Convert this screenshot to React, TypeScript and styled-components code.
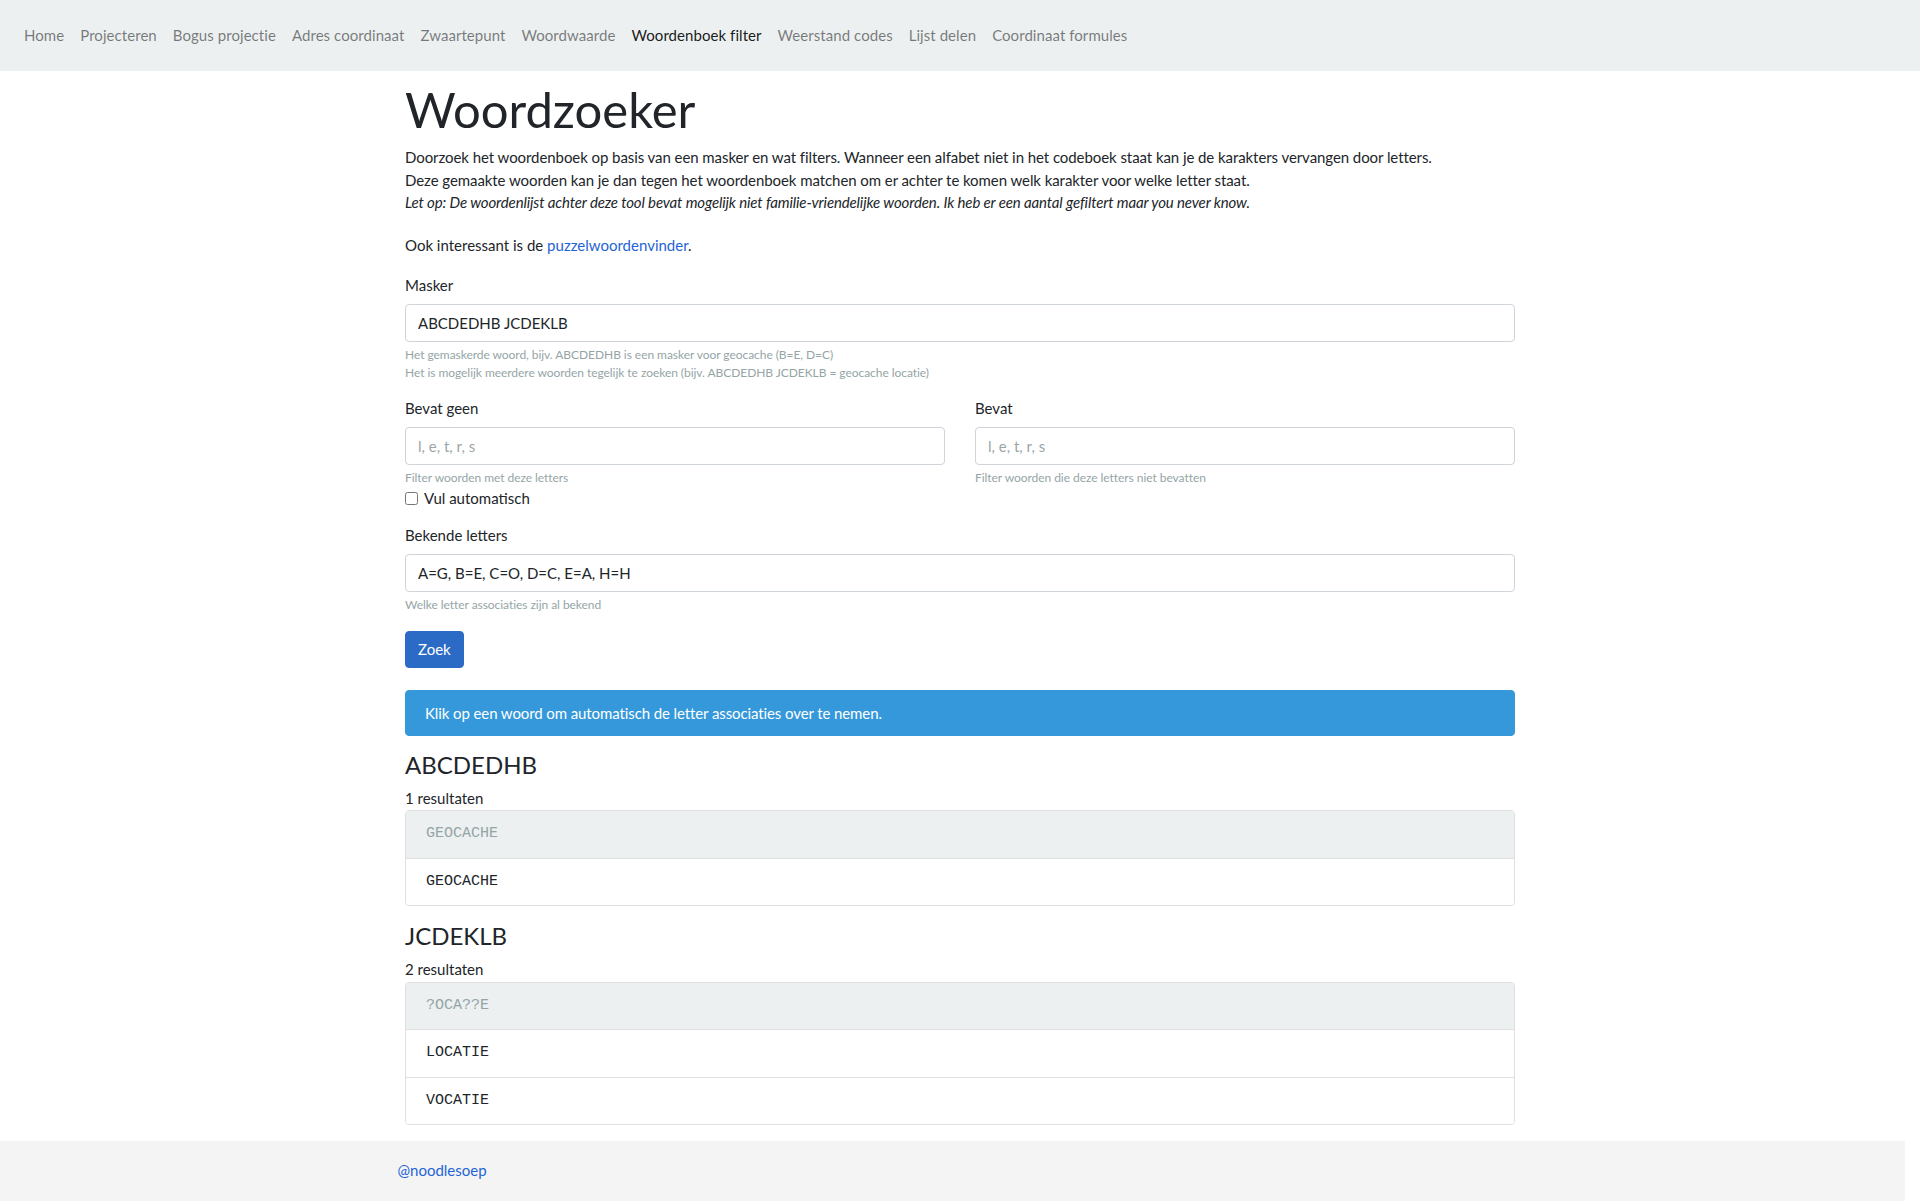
import React from "react";
import styled, { createGlobalStyle } from "styled-components";

const GlobalStyle = createGlobalStyle`
  *, *::before, *::after { box-sizing: border-box; }
  html, body { margin: 0; padding: 0; }
  body {
    font-family: Lato, "Open Sans", "Liberation Sans", sans-serif;
    font-size: 15px;
    line-height: 1.5;
    color: #212529;
    background: #fff;
  }
`;

const NavBar = styled.nav`
  background: #ecf0f1;
  padding: 16px 16px;
  display: flex;
  align-items: center;
`;

const NavList = styled.ul`
  list-style: none;
  margin: 0;
  padding: 0;
  display: flex;
`;

const NavLink = styled.a<{ $active?: boolean }>`
  display: block;
  padding: 8px 8px;
  line-height: 22.5px;
  font-size: 15px;
  letter-spacing: 0.06px;
  text-decoration: none;
  color: ${(p) => (p.$active ? "rgba(0,0,0,0.9)" : "rgba(0,0,0,0.5)")};
  cursor: pointer;
`;

const Container = styled.main`
  width: 1140px;
  margin: 0 auto;
  padding: 9px 15px 0;
`;

const Title = styled.h1`
  font-size: 49px;
  font-weight: 400;
  line-height: 1.2;
  margin: 0 0 8px;
`;

const Intro = styled.p`
  margin: 0 0 20px;
  letter-spacing: -0.07px;
  em { letter-spacing: -0.13px; }
`;

const Para = styled.p`
  margin: 0 0 18px;
`;

const Link = styled.a`
  color: #1f64d4;
  text-decoration: none;
`;

const FormGroup = styled.div`
  margin-bottom: 15px;
`;

const Label = styled.label`
  display: inline-block;
  margin-bottom: 7.5px;
`;

const Input = styled.input`
  display: block;
  width: 100%;
  height: 38px;
  padding: 6px 12px;
  font-family: inherit;
  font-size: 15px;
  line-height: 1.5;
  color: #212529;
  background: #fff;
  border: 1px solid #ced4da;
  border-radius: 4px;
  outline: none;
  &::placeholder { color: #9aa6a7; }
`;

const Help = styled.small`
  display: block;
  margin-top: 3.75px;
  font-size: 12px;
  line-height: 18px;
  letter-spacing: -0.05px;
  color: #95a5a6;
`;

const Row = styled.div`
  display: grid;
  grid-template-columns: 1fr 1fr;
  column-gap: 30px;
`;

const Check = styled.label`
  display: flex;
  align-items: flex-start;
  gap: 6px;
  line-height: 22.5px;
  input { margin: 5px 0 0 0; width: 13px; height: 13px; }
`;

const Button = styled.button`
  display: inline-block;
  font-family: inherit;
  font-size: 15px;
  line-height: 22.5px;
  padding: 6px 12px;
  color: #fff;
  background: #2c6bc5;
  border: 1px solid #2c6bc5;
  border-radius: 4px;
  margin: 2px 0 22px;
  cursor: pointer;
`;

const Alert = styled.div`
  background: #3498db;
  border: 1px solid #3498db;
  color: #fff;
  border-radius: 4px;
  padding: 11px 19px;
  margin-bottom: 15px;
  letter-spacing: -0.1px;
`;

const SectionTitle = styled.h3`
  font-size: 24px;
  font-weight: 400;
  line-height: 1.2;
  margin: 0 0 7px;
`;

const Count = styled.div`
  line-height: 22.5px;
`;

const List = styled.ul`
  list-style: none;
  margin: 1px 0 16px;
  padding: 0;
  border: 1px solid rgba(0, 0, 0, 0.125);
  border-radius: 4px;
  overflow: hidden;
`;

const Item = styled.li<{ $head?: boolean }>`
  padding: 12px 20px;
  line-height: 22.5px;
  font-family: "Liberation Mono", "DejaVu Sans Mono", monospace;
  font-size: 15px;
  background: ${(p) => (p.$head ? "#ecf0f1" : "#fff")};
  color: ${(p) => (p.$head ? "#95a5a6" : "#212529")};
  & + & { border-top: 1px solid rgba(0, 0, 0, 0.125); }
  cursor: ${(p) => (p.$head ? "default" : "pointer")};
`;

const Footer = styled.footer`
  width: calc(100% - 15px);
  background: #f4f4f4;
  margin-top: 15px;
  padding: 18px 0 30px;
`;

const FooterInner = styled.div`
  width: 1140px;
  margin: 0 auto;
  padding: 0 15px;
  line-height: 22.5px;
`;

const navItems = [
  "Home",
  "Projecteren",
  "Bogus projectie",
  "Adres coordinaat",
  "Zwaartepunt",
  "Woordwaarde",
  "Woordenboek filter",
  "Weerstand codes",
  "Lijst delen",
  "Coordinaat formules",
];

const results = [
  { mask: "ABCDEDHB", pattern: "GEOCACHE", words: ["GEOCACHE"] },
  { mask: "JCDEKLB", pattern: "?OCA??E", words: ["LOCATIE", "VOCATIE"] },
];

export default function App() {
  return (
    <>
      <GlobalStyle />
      <NavBar>
        <NavList>
          {navItems.map((n) => (
            <li key={n}>
              <NavLink $active={n === "Woordenboek filter"}>{n}</NavLink>
            </li>
          ))}
        </NavList>
      </NavBar>
      <Container>
        <Title>Woordzoeker</Title>
        <Intro>
          Doorzoek het woordenboek op basis van een masker en wat filters. Wanneer een alfabet niet in het codeboek staat kan je de karakters vervangen door letters.
          <br />
          Deze gemaakte woorden kan je dan tegen het woordenboek matchen om er achter te komen welk karakter voor welke letter staat.
          <br />
          <em>Let op: De woordenlijst achter deze tool bevat mogelijk niet familie-vriendelijke woorden. Ik heb er een aantal gefiltert maar you never know.</em>
        </Intro>
        <Para>
          Ook interessant is de <Link>puzzelwoordenvinder</Link>.
        </Para>
        <FormGroup>
          <Label>Masker</Label>
          <Input defaultValue="ABCDEDHB JCDEKLB" />
          <Help>
            Het gemaskerde woord, bijv. ABCDEDHB is een masker voor geocache (B=E, D=C)
            <br />
            Het is mogelijk meerdere woorden tegelijk te zoeken (bijv. ABCDEDHB JCDEKLB = geocache locatie)
          </Help>
        </FormGroup>
        <Row>
          <FormGroup>
            <Label>Bevat geen</Label>
            <Input placeholder="l, e, t, r, s" />
            <Help>Filter woorden met deze letters</Help>
            <Check>
              <input type="checkbox" />
              Vul automatisch
            </Check>
          </FormGroup>
          <FormGroup>
            <Label>Bevat</Label>
            <Input placeholder="l, e, t, r, s" />
            <Help>Filter woorden die deze letters niet bevatten</Help>
          </FormGroup>
        </Row>
        <FormGroup>
          <Label>Bekende letters</Label>
          <Input defaultValue="A=G, B=E, C=O, D=C, E=A, H=H" />
          <Help>Welke letter associaties zijn al bekend</Help>
        </FormGroup>
        <Button>Zoek</Button>
        <Alert>Klik op een woord om automatisch de letter associaties over te nemen.</Alert>
        {results.map((r) => (
          <section key={r.mask}>
            <SectionTitle>{r.mask}</SectionTitle>
            <Count>{r.words.length} resultaten</Count>
            <List>
              <Item $head>{r.pattern}</Item>
              {r.words.map((w) => (
                <Item key={w}>{w}</Item>
              ))}
            </List>
          </section>
        ))}
      </Container>
      <Footer>
        <FooterInner>
          <Link>@noodlesoep</Link>
        </FooterInner>
      </Footer>
    </>
  );
}
